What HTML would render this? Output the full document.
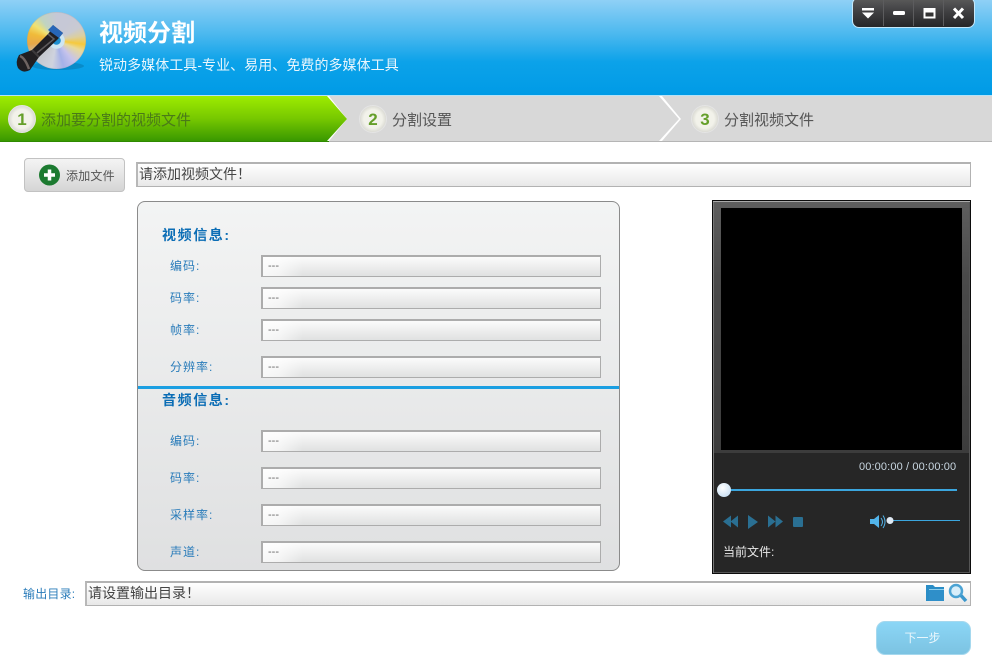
<!DOCTYPE html>
<html><head><meta charset="utf-8"><style>
*{box-sizing:border-box;margin:0;padding:0}
html,body{width:992px;height:665px;overflow:hidden;background:#fff}
body{position:relative;font-family:"Liberation Sans","WenQuanYi Zen Hei","Noto Sans CJK SC",sans-serif}
.a{position:absolute;white-space:nowrap}
.inp{position:absolute;border:1px solid #b2b2b2;border-top:2px solid #b2b2b2;border-left:2px solid #b8b8b8;background:linear-gradient(#fff,#e8e8e8);color:#444}
.f{position:absolute;left:261px;width:340px;height:22px;border:1px solid #acacac;border-left-width:2px;border-top-width:2px;background:linear-gradient(90deg,rgba(255,255,255,.75),rgba(255,255,255,.6) 16px,rgba(255,255,255,0) 40px),linear-gradient(#fbfbfb,#e0e1e1);font-size:11px;line-height:18px;color:#666;padding-left:5px}
.l{position:absolute;font-size:12px;color:#2a7cba;line-height:14px;white-space:nowrap;letter-spacing:1px}
.h{position:absolute;left:162px;font-size:14px;font-weight:bold;color:#0b6db5;line-height:16px;letter-spacing:1.6px;white-space:nowrap}
.c{position:absolute;top:105px;width:28px;height:28px;border-radius:50%;background:radial-gradient(circle,#f2f2ea 50%,#dcdcd5 70%,#c0c0bb);border:1px solid #e4e4e4;color:#659f2a;font:bold 17px/27px "Liberation Sans",sans-serif;text-align:center}
.s{position:absolute;top:112px;font-size:15px;line-height:18px;white-space:nowrap;color:#555}
</style></head><body>
<div class="a" style="left:0;top:0;width:992px;height:95px;background:linear-gradient(#8fd0f6 0,#4db9ef 35%,#0ca2e9 65%,#009be6 100%)"></div>
<div class="a" style="left:0;top:95px;width:992px;height:1px;background:#b5e2f7"></div>

<svg class="a" style="left:16px;top:56px" width="72" height="20" viewBox="0 0 72 20"><ellipse cx="42" cy="10" rx="26" ry="4" fill="#07608f" opacity=".35"/></svg>
<div class="a" style="left:27px;top:12px;width:59px;height:57px;border-radius:50%;background:radial-gradient(circle at 50% 50%,#1e8fd0 0 4px,#cfe6f2 4.5px 8px,rgba(255,255,255,0) 8.5px),conic-gradient(from 0deg at 50% 50%,#c6c8d6 0 30deg,#c9cad2 60deg,#dccf9e 80deg,#f6c93c 98deg,#e8d99a 112deg,#c6c3ec 140deg,#a5b1e8 165deg,#cfd3de 190deg,#c2c5ca 235deg,#e9a848 262deg,#f0bb3a 285deg,#f0e272 305deg,#c0d4c0 325deg,#c6c8d6 360deg);box-shadow:inset 0 0 1px #8a9098"></div>
<svg class="a" style="left:10px;top:20px" width="60" height="56" viewBox="0 0 60 56">
<path d="M43 5L53 13L48 19L29 37L20 50Q13 54 8 48Q5 42 9 35L22 30L39 13Z" fill="#211f22"/>
<path d="M10 36Q15 38 19 49" stroke="#6f6462" stroke-width="2.500" fill="none"/>
<path d="M22 30L29 37" stroke="#3d3a3c" stroke-width="2"/>
<path d="M38 14L44 19L27 33" stroke="#5f5b5d" stroke-width="1.500" fill="none"/>
<path d="M43 5L53 13L49 18L38 10Z" fill="#2766b8"/>
</svg>
<div class="a" style="left:99px;top:20px;font-size:24px;line-height:28px;font-weight:bold;color:#fff">视频分割</div>
<div class="a" style="left:99px;top:57px;font-size:14px;line-height:16px;color:#e9f6fd;letter-spacing:.05px">锐动多媒体工具-专业、易用、免费的多媒体工具</div>

<div class="a" style="left:852px;top:-3px;width:123px;height:31px;border-radius:7px;border:1px solid #c5e8fa;background:linear-gradient(#5c5c5c 0,#3e3e40 50%,#262628 100%)"></div>
<svg class="a" style="left:852px;top:0" width="123" height="28" viewBox="0 0 123 28">
<path d="M31.500 0V26M61.500 0V26M91.500 0V26" stroke="#5c5c5e"/>
<path d="M10 8H22V10.500H10ZM10 12.500H22L16 18.500Z" fill="#fff"/>
<rect x="41" y="11" width="12" height="4" rx="1.500" fill="#fff"/>
<path d="M71.500 8H83.500V18.500H71.500Z" fill="#fff"/><rect x="73.500" y="12.500" width="8" height="4" fill="#333"/>
<path d="M102 8.500L111 18M111 8.500L102 18" stroke="#fff" stroke-width="3"/>
</svg>

<svg class="a" style="left:0;top:96px" width="992" height="46" viewBox="0 0 992 46">
<defs><linearGradient id="g" x1="0" y1="0" x2="0" y2="1"><stop offset="0" stop-color="#9eec00"/><stop offset=".5" stop-color="#77c800"/><stop offset="1" stop-color="#399800"/></linearGradient></defs>
<path d="M329 0H659L679 23L659 45H329L347 23Z" fill="#d8d8d8"/>
<path d="M662 0H992V45H662L681 23Z" fill="#d8d8d8"/>
<path d="M329 45.500H992" stroke="#b5b5b5"/>
<path d="M0 0H327L347 23L327 45H0Z" fill="url(#g)"/>
<path d="M0 45.500H329" stroke="#2f8a00"/>
</svg>
<div class="c" style="left:8px">1</div><div class="s" style="left:41px;color:#4a7a18">添加要分割的视频文件</div>
<div class="c" style="left:359px">2</div><div class="s" style="left:392px">分割设置</div>
<div class="c" style="left:691px">3</div><div class="s" style="left:724px">分割视频文件</div>

<div class="a" style="left:24px;top:158px;width:101px;height:34px;border:1px solid #c2c2c2;border-radius:4px;background:linear-gradient(#f4f4f4,#d5d5d5)"></div>
<svg class="a" style="left:38px;top:164px" width="23" height="23" viewBox="0 0 23 23"><circle cx="11.500" cy="11" r="10.500" fill="#1c7a30"/><path d="M11.500 5.500V16.500M6 11H17" stroke="#fff" stroke-width="3.500"/></svg>
<div class="a" style="left:66px;top:169px;font-size:12px;line-height:15px;color:#555;letter-spacing:.2px">添加文件</div>
<div class="inp" style="left:136px;top:162px;width:835px;height:25px;font-size:14px;line-height:21px;padding-left:1px">请添加视频文件！</div>

<div class="a" style="left:137px;top:201px;width:483px;height:370px;border:1px solid #8b8b8b;border-radius:8px;background:linear-gradient(#f3f4f4,#dfe0e1)"></div>
<div class="a" style="left:138px;top:386px;width:481px;height:3px;background:#1b9fe2"></div>
<div class="h" style="top:227px">视频信息:</div>
<div class="h" style="top:392px">音频信息:</div>
<div class="l" style="left:170px;top:259px">编码:</div><div class="f" style="top:255px">---</div>
<div class="l" style="left:170px;top:291px">码率:</div><div class="f" style="top:287px">---</div>
<div class="l" style="left:170px;top:323px">帧率:</div><div class="f" style="top:319px">---</div>
<div class="l" style="left:170px;top:360px">分辨率:</div><div class="f" style="top:356px">---</div>
<div class="l" style="left:170px;top:434px">编码:</div><div class="f" style="top:430px">---</div>
<div class="l" style="left:170px;top:471px">码率:</div><div class="f" style="top:467px">---</div>
<div class="l" style="left:170px;top:508px">采样率:</div><div class="f" style="top:504px">---</div>
<div class="l" style="left:170px;top:545px">声道:</div><div class="f" style="top:541px">---</div>

<div class="a" style="left:712px;top:200px;width:259px;height:374px;background:#262626;border:1px solid #0c0c0c;box-shadow:inset 0 1px #aaa,inset 1px 0 #777,inset -1px 0 #555,inset 0 -1px #555"></div>
<div class="a" style="left:714px;top:202px;width:255px;height:251px;background:linear-gradient(#5e5e5e,#4a4a4a 30%,#3c3c3c)"></div>
<div class="a" style="left:721px;top:208px;width:241px;height:242px;background:#000"></div>
<div class="a" style="left:859px;top:460px;font-size:11px;line-height:14px;color:#c8d6e0;letter-spacing:.13px">00:00:00 / 00:00:00</div>
<div class="a" style="left:724px;top:489px;width:233px;height:2px;background:#3ba6de"></div>
<div class="a" style="left:717px;top:483px;width:14px;height:14px;border-radius:50%;background:radial-gradient(circle at 40% 35%,#fff,#b9d6ef)"></div>
<svg class="a" style="left:722px;top:512px" width="240" height="20" viewBox="0 0 240 20">
<path d="M1 9.500L9 3.500V15.500ZM8.500 9.500L16 3.500V15.500Z" fill="#2a6f92"/>
<path d="M26 3L36 10L26 17Z" fill="#2a6f92"/>
<path d="M46 3.500L53.500 9.500L46 15.500ZM53.500 3.500L61 9.500L53.500 15.500Z" fill="#2a6f92"/>
<rect x="71" y="5" width="10" height="10" rx="1" fill="#2a6f92"/>
<path d="M148 7H152L157 3V16L152 12H148Z" fill="#52b4ea"/>
<path d="M159 6Q162 10 159 14M161 3.500Q165 10 161 16" stroke="#52b4ea" fill="none"/>
<path d="M168 8.500H238" stroke="#3ba6de"/>
<circle cx="168" cy="8.500" r="3.500" fill="#dfe9f3"/>
</svg>
<div class="a" style="left:723px;top:545px;font-size:12px;line-height:15px;color:#e8e8e8">当前文件:</div>

<div class="l" style="left:23px;top:587px;letter-spacing:.2px">输出目录:</div>
<div class="inp" style="left:85px;top:581px;width:886px;height:25px;font-size:14px;line-height:21px;padding-left:1px">请设置输出目录！</div>
<svg class="a" style="left:925px;top:583px" width="43" height="21" viewBox="0 0 43 21">
<path d="M1 2H8L10 4H19V18H1Z" fill="#2a8dc6"/><path d="M4 7H19V18H4Z" fill="#2f8fc9"/><path d="M4 6.500H19" stroke="#8fd0ee"/>
<circle cx="31" cy="8" r="6" fill="#d8eefa" stroke="#4ba3d4" stroke-width="2.500"/>
<path d="M36 12.500L41 18" stroke="#3b97cc" stroke-width="3.500"/>
</svg>
<div class="a" style="left:876px;top:621px;width:95px;height:34px;border-radius:9px;border:1px solid #a5d8ee;background:linear-gradient(#8bd6f6,#7cc3e2);color:#e8f6fc;font-size:12px;line-height:33px;text-align:center;padding-right:2px">下一步</div>
</body></html>
